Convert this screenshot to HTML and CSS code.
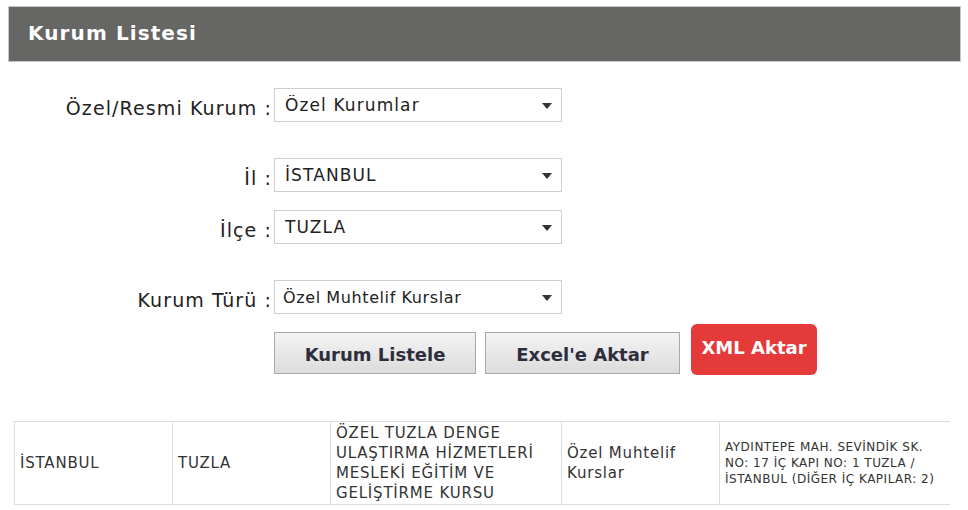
FILE: index.html
```html
<!DOCTYPE html>
<html lang="tr">
<head>
    <meta charset="UTF-8">
    <meta name="viewport" content="width=device-width, initial-scale=1.0">
    <title>Kurum Listesi</title>
    <link rel="stylesheet" href="styles.css">
</head>
<body>
    <div class="page-title">Kurum Listesi</div>

    <div class="search-form">
        <div class="form-row first">
            <label>Özel/Resmi Kurum :</label>
            <div class="select-box"><select><option>Özel Kurumlar</option></select></div>
        </div>
        <div class="form-row row-gap">
            <label>İl :</label>
            <div class="select-box"><select><option>İSTANBUL</option></select></div>
        </div>
        <div class="form-row">
            <label>İlçe :</label>
            <div class="select-box"><select><option>TUZLA</option></select></div>
        </div>
        <div class="form-row row-gap">
            <label>Kurum Türü :</label>
            <div class="select-box small"><select><option>Özel Muhtelif Kurslar</option></select></div>
        </div>
        <div class="form-row buttons">
            <span></span>
            <div class="btn-group">
                <button class="btn-gray btn-list">Kurum Listele</button>
                <button class="btn-gray btn-excel">Excel'e Aktar</button>
                <button class="btn-red">XML Aktar</button>
            </div>
        </div>
    </div>

    <table class="result-table">
        <tr>
            <td class="c1">İSTANBUL</td>
            <td class="c2">TUZLA</td>
            <td class="c3">ÖZEL TUZLA DENGE ULAŞTIRMA HİZMETLERİ MESLEKİ EĞİTİM VE GELİŞTİRME KURSU</td>
            <td class="c4">Özel Muhtelif Kurslar</td>
            <td class="c5">AYDINTEPE MAH. SEVİNDİK SK. NO: 17 İÇ KAPI NO: 1 TUZLA / İSTANBUL (DİĞER İÇ KAPILAR: 2)</td>
        </tr>
    </table>
</body>
</html>
```

FILE: styles.css
```css
body {
    font-family: "DejaVu Sans", Verdana, sans-serif;
    margin: 0;
    padding: 6px 7px 0 8px;
    background: #fff;
    color: #222;
}
.page-title {
    background: #666664;
    border: 1px solid #c8c8c8;
    color: #fff;
    font-size: 20px;
    letter-spacing: 1.1px;
    font-weight: bold;
    height: 54px;
    line-height: 53px;
    padding-left: 19px;
}
.search-form {
    padding-top: 26px;
}
.form-row {
    display: grid;
    grid-template-columns: 264px 288px;
    column-gap: 2px;
    align-items: center;
    margin-top: 18px;
}
.form-row.first {
    margin-top: 0;
}
.form-row.row-gap {
    margin-top: 36px;
}
.form-row label {
    text-align: right;
    font-size: 19px;
    letter-spacing: 1.1px;
    color: #222;
    padding-top: 5px;
}
.select-box {
    position: relative;
    height: 34px;
}
.select-box select {
    appearance: none;
    -webkit-appearance: none;
    width: 100%;
    height: 34px;
    border: 1px solid #cfcfcf;
    background: #fff;
    font-family: "DejaVu Sans", Verdana, sans-serif;
    font-size: 17px;
    letter-spacing: 1.1px;
    color: #222;
    padding: 0 10px;
    border-radius: 0;
}
.select-box.small select {
    font-size: 16px;
    letter-spacing: 0.6px;
    padding-left: 8px;
}
.select-box::after {
    content: "";
    position: absolute;
    right: 10px;
    top: 15px;
    border-left: 5px solid transparent;
    border-right: 5px solid transparent;
    border-top: 6px solid #333;
    pointer-events: none;
}
.form-row.buttons {
    margin-top: 17px;
    align-items: start;
}
.btn-group {
    display: flex;
    align-items: center;
    width: 560px;
}
button {
    font-family: "DejaVu Sans", Verdana, sans-serif;
    font-size: 18px;
    font-weight: bold;
    cursor: pointer;
}
.btn-gray {
    height: 42px;
    border: 1px solid #a9a9a9;
    background: linear-gradient(#f4f4f4, #dcdcdc);
    color: #2d2d3c;
    border-radius: 0;
    padding-top: 3px;
}
.btn-list {
    width: 202px;
    margin-right: 9px;
}
.btn-excel {
    width: 195px;
    margin-right: 11px;
}
.btn-red {
    width: 126px;
    height: 51px;
    margin-top: -7px;
    border: none;
    border-radius: 6px;
    background: #e53a3a;
    color: #fff;
    font-size: 18px;
    padding-bottom: 6px;
}
.result-table {
    margin: 46px 0 0 6px;
    border-collapse: collapse;
    font-size: 15px;
    letter-spacing: 0.8px;
    color: #333;
}
.result-table td {
    border-top: 1px solid #dcdce4;
    border-bottom: 1px solid #dcdce4;
    border-left: 1px solid #dcdce4;
    padding: 1px 5px;
    height: 80px;
    vertical-align: middle;
    line-height: 20px;
}
.result-table .c1 { width: 147px; }
.result-table .c2 { width: 147px; }
.result-table .c3 { width: 220px; }
.result-table .c4 { width: 147px; }
.result-table .c5 {
    width: 220px;
    font-size: 12px;
    letter-spacing: 0.5px;
    line-height: 16px;
}
```
